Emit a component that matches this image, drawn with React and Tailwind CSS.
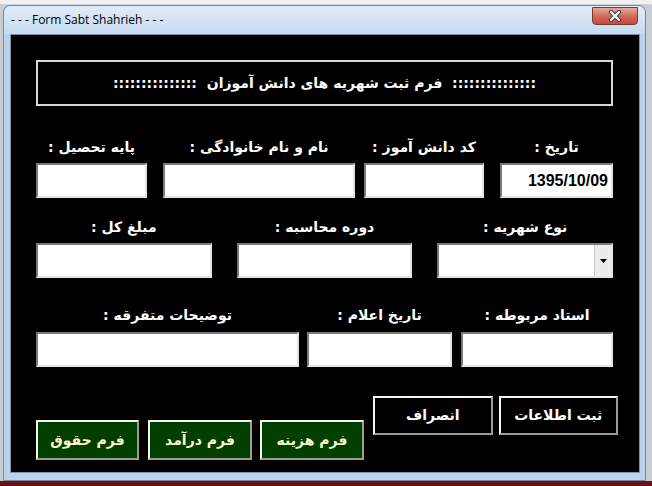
import React from 'react'

const fa = { fontFamily: '"DejaVu Sans", sans-serif' }

// sunken white text box
function TextBox({ className = '', children }) {
  return (
    <div
      className={`h-[35px] bg-white border-2 border-t-[#7a7a7a] border-l-[#7a7a7a] border-b-[#e3e3e3] border-r-[#e3e3e3] ${className}`}
    >
      {children}
    </div>
  )
}

function Field({ label, className = '', children }) {
  return (
    <div className={`flex flex-col items-center ${className}`}>
      <div className="h-[20px] leading-[20px] text-white font-bold text-[14px] whitespace-nowrap" style={fa}>
        {label}
      </div>
      {children}
    </div>
  )
}

function Button({ label, className = '' }) {
  return (
    <div
      className={`flex items-center justify-center border-2 border-t-[#f4f4f4] border-l-[#f4f4f4] border-b-[#9c9c9c] border-r-[#9c9c9c] font-bold text-[14px] ${className}`}
      style={fa}
    >
      {label}
    </div>
  )
}

export default function App() {
  const dots = ':::::::::::::::'

  return (
    <div className="w-[652px] h-[486px] overflow-hidden bg-[#c9cdd2] flex flex-col">
      {/* spreadsheet strip behind the window */}
      <div className="h-[5px] bg-[#eef0f2] border-b border-[#d0d4d8]" />

      <div className="pl-[3px]">
        {/* window frame */}
        <div className="w-[643px] h-[476px] rounded-t-[7px] border border-[#6f8aa6] bg-[#bcd3ec] flex flex-col">
          {/* title bar */}
          <div className="h-[28px] flex items-start justify-between rounded-t-[7px] bg-gradient-to-b from-[#e0ecf8] to-[#c6daf0]">
            <span
              className="pl-[7px] pt-[6px] text-[12px] leading-[16px] text-black"
              style={{ fontFamily: '"Open Sans", "Liberation Sans", sans-serif' }}
            >
              - - - Form Sabt Shahrieh - - -
            </span>
            <div className="mr-[7px] mt-[1px] w-[46px] h-[18px] rounded-b-[4px] border border-[#7d3a30] bg-gradient-to-b from-[#e8a89a] via-[#d46a5c] to-[#c34b3e] flex items-center justify-center">
              <svg width="14" height="12" viewBox="0 0 14 12">
                <path d="M3 2 L11 10 M11 2 L3 10" stroke="#3a3a3a" strokeWidth="4.2" strokeLinecap="round" />
                <path d="M3 2 L11 10 M11 2 L3 10" stroke="#ffffff" strokeWidth="2.4" strokeLinecap="round" />
              </svg>
            </div>
          </div>

          {/* client area */}
          <div className="ml-[6px] w-[630px] h-[439px] bg-black border border-[#7d93aa] pl-[25px] pr-[26px] pt-[25px]" dir="rtl">
            {/* heading box */}
            <div className="w-[577px] h-[46px] border-2 border-[#d8d8d8] flex items-center justify-center">
              <span className="text-white font-bold text-[14px] whitespace-nowrap" style={fa}>
                {dots}&nbsp;&nbsp;فرم ثبت شهریه های دانش آموزان&nbsp;&nbsp;{dots}
              </span>
            </div>

            {/* row 1 */}
            <div className="flex mt-[31px] w-[577px]">
              <Field label="تاریخ :" className="w-[113px] ml-[16px]">
                <TextBox className="mt-[6px] w-full flex items-center justify-start pr-[3px]">
                  <span
                    className="text-[16px] font-bold text-black"
                    style={{ fontFamily: '"Liberation Sans", Arial, sans-serif' }}
                    dir="ltr"
                  >
                    1395/10/09
                  </span>
                </TextBox>
              </Field>
              <Field label="کد دانش آموز :" className="w-[120px] ml-[9px]">
                <TextBox className="mt-[6px] w-full" />
              </Field>
              <Field label="نام و نام خانوادگی :" className="w-[192px] ml-[16px]">
                <TextBox className="mt-[6px] w-full" />
              </Field>
              <Field label="پایه تحصیل :" className="w-[111px]">
                <TextBox className="mt-[6px] w-full" />
              </Field>
            </div>

            {/* row 2 */}
            <div className="flex mt-[19px] w-[577px]">
              <Field label="نوع شهریه :" className="w-[176px] ml-[25px]">
                <TextBox className="mt-[6px] w-full h-[34px] flex justify-start">
                  <div className="w-[17px] h-full bg-[#ececec] border-l border-[#c8c8c8] flex items-center justify-center" dir="ltr">
                    <svg width="7" height="4" viewBox="0 0 7 4">
                      <path d="M0 0 H7 L3.5 4 Z" fill="#000" />
                    </svg>
                  </div>
                </TextBox>
              </Field>
              <Field label="دوره محاسبه :" className="w-[176px] ml-[25px]">
                <TextBox className="mt-[6px] w-full h-[34px]" />
              </Field>
              <Field label="مبلغ کل :" className="w-[176px]">
                <TextBox className="mt-[6px] w-full h-[34px]" />
              </Field>
            </div>

            {/* row 3 */}
            <div className="flex mt-[27px] w-[577px]">
              <Field label="استاد مربوطه :" className="w-[152px] ml-[9px]">
                <TextBox className="mt-[7px] w-full" />
              </Field>
              <Field label="تاریخ اعلام :" className="w-[145px] ml-[8px]">
                <TextBox className="mt-[7px] w-full" />
              </Field>
              <Field label="توضیحات متفرقه :" className="w-[263px]">
                <TextBox className="mt-[7px] w-full" />
              </Field>
            </div>

            {/* actions */}
            <div className="flex mt-[29px] -mr-[5px] w-[582px] h-[64px]">
              <Button label="ثبت اطلاعات" className="w-[120px] h-[39px] ml-[6px] bg-black text-white" />
              <Button label="انصراف" className="w-[120px] h-[39px] ml-[9px] bg-black text-white" />
              <div className="flex self-end">
                <Button label="فرم هزینه" className="w-[104px] h-[40px] ml-[8px] bg-[#003f00] text-[#fff9c8]" />
                <Button label="فرم درآمد" className="w-[104px] h-[40px] ml-[9px] bg-[#003f00] text-[#fff9c8]" />
                <Button label="فرم حقوق" className="w-[103px] h-[40px] bg-[#003f00] text-[#fff9c8]" />
              </div>
            </div>
          </div>
        </div>
      </div>

      {/* desktop strip under the window */}
      <div className="flex-1 bg-[#6e1010]" />
    </div>
  )
}
